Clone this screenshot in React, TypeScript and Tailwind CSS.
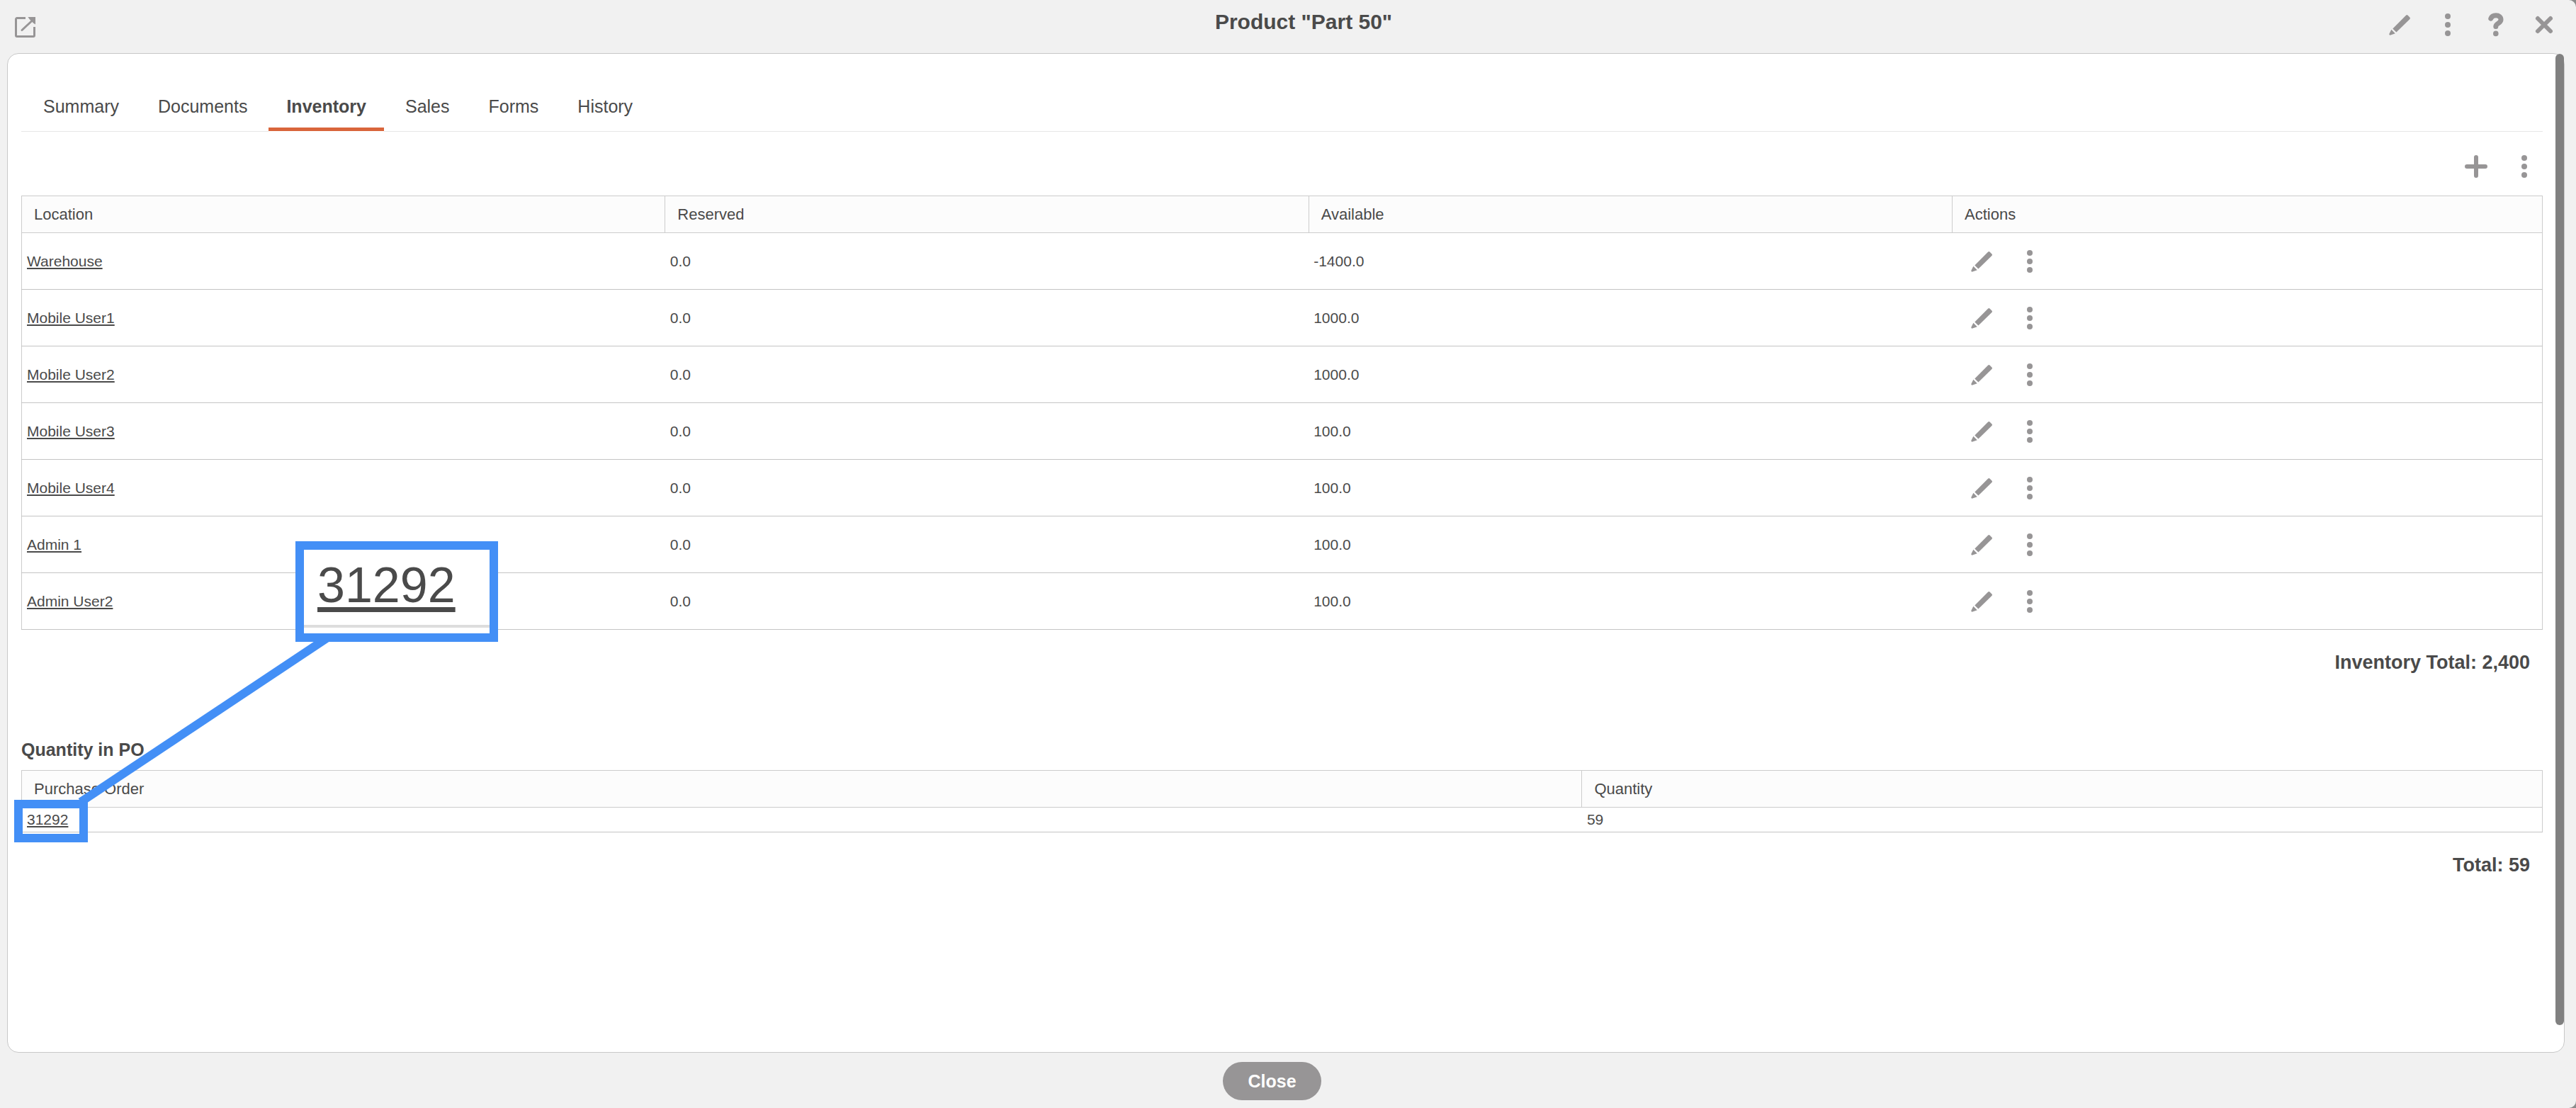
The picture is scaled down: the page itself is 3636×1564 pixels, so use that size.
import type { ReactNode } from "react";

const tabs = ["Summary", "Documents", "Inventory", "Sales", "Forms", "History"];

const inventory = [
  { location: "Warehouse", reserved: "0.0", available: "-1400.0" },
  { location: "Mobile User1", reserved: "0.0", available: "1000.0" },
  { location: "Mobile User2", reserved: "0.0", available: "1000.0" },
  { location: "Mobile User3", reserved: "0.0", available: "100.0" },
  { location: "Mobile User4", reserved: "0.0", available: "100.0" },
  { location: "Admin 1", reserved: "0.0", available: "100.0" },
  { location: "Admin User2", reserved: "0.0", available: "100.0" },
];

const purchaseOrders = [{ number: "31292", quantity: "59" }];

function PencilIcon() {
  return (
    <svg viewBox="0 0 32 32" className="size-8" fill="currentColor" aria-hidden="true">
      <path d="M6.3 21.5 25.2 2.6a1.6 1.6 0 0 1 2.3 0L30.4 5.6a1.6 1.6 0 0 1 0 2.3L11.4 26.6Z" />
      <path d="M4.4 22.8 9.8 28.2 3.2 30.6a1.4 1.4 0 0 1-1.8-1.8Z" />
    </svg>
  );
}

function DotsIcon() {
  return (
    <svg viewBox="0 0 32 32" className="size-8" fill="currentColor" aria-hidden="true">
      <circle cx="16" cy="4" r="4" />
      <circle cx="16" cy="16" r="4" />
      <circle cx="16" cy="28" r="4" />
    </svg>
  );
}

function HelpIcon() {
  return (
    <svg viewBox="0 0 32 32" className="size-8 overflow-visible" fill="none" stroke="currentColor" aria-hidden="true">
      <path
        d="M8.8 7.2C10 3.8 12.6 2.8 16 2.8c4.2 0 7 2.2 7 6 0 5.2-7.2 4.8-7.2 9.8"
        strokeWidth="7"
        strokeLinecap="round"
      />
      <circle cx="15.8" cy="28.4" r="3.8" fill="currentColor" stroke="none" />
    </svg>
  );
}

function CloseIcon() {
  return (
    <svg viewBox="0 0 32 32" className="size-8" stroke="currentColor" strokeWidth="6" strokeLinecap="round" aria-hidden="true">
      <path d="M7 7 25 25M25 7 7 25" />
    </svg>
  );
}

function PlusIcon() {
  return (
    <svg viewBox="0 0 32 32" className="size-8" stroke="currentColor" strokeWidth="6" strokeLinecap="round" aria-hidden="true">
      <path d="M16 3V29M3 16H29" />
    </svg>
  );
}

function OpenIcon() {
  return (
    <svg viewBox="0 0 30 30" className="size-[30px]" fill="none" stroke="currentColor" strokeWidth="3" aria-hidden="true">
      <path d="M15 1.5H3A1.5 1.5 0 0 0 1.5 3V26A1.5 1.5 0 0 0 3 27.5H26A1.5 1.5 0 0 0 27.5 26V14" />
      <path d="M25 4.5 10 18.5" strokeLinecap="round" />
      <path d="M18.5 0H29V10.5L26 8.5 20.5 3Z" fill="currentColor" stroke="none" />
    </svg>
  );
}

function IconButton({ label, children }: { label: string; children: ReactNode }) {
  return (
    <button type="button" aria-label={label} className="flex size-8 items-center justify-center text-[#979596]">
      {children}
    </button>
  );
}

function HeadCell({ className = "", children }: { className?: string; children: ReactNode }) {
  return (
    <th className={`border border-[#cccccc] px-[17px] text-left font-normal text-[22px] leading-7 ${className}`}>
      {children}
    </th>
  );
}

export default function App() {
  return (
    <div className="min-h-screen bg-[#8c8c8c] font-['Liberation_Sans',Arial,sans-serif] text-[#4a4a4a]">
      <div className="flex min-h-screen flex-col rounded-r-[10px] bg-[#f1f1f1]">
        {/* Title bar */}
        <header className="flex h-[75px] shrink-0 items-start pl-[21px] pr-[29px]">
          <button type="button" aria-label="Open in new window" className="mt-6 text-[#979596]">
            <OpenIcon />
          </button>
          <h1 className="flex-1 pl-[258px] pt-[13px] text-center text-[30px] leading-9 font-bold">
            Product "Part 50"
          </h1>
          <div className="flex gap-9 pt-[19px]">
            <IconButton label="Edit product"><PencilIcon /></IconButton>
            <IconButton label="More"><DotsIcon /></IconButton>
            <IconButton label="Help"><HelpIcon /></IconButton>
            <IconButton label="Close window"><CloseIcon /></IconButton>
          </div>
        </header>

        <main className="relative mr-4 ml-[10px] flex-1 rounded-2xl border border-[#c8c8c8] bg-white pt-[51px] pr-[30px] pl-[19px]">
          {/* Tabs */}
          <nav className="flex gap-[5px] border-b border-[#e6e6e6] pl-[6px] text-[25px] leading-[30px]">
            {tabs.map((tab) => (
              <a
                key={tab}
                href="#"
                className={
                  tab === "Inventory"
                    ? "border-b-[5px] border-[#d9653b] px-[25px] pt-2 pb-[15px] font-bold shadow-[0_1px_0_white]"
                    : "px-[25px] pt-2 pb-5"
                }
              >
                {tab}
              </a>
            ))}
          </nav>

          <div className="flex justify-end gap-9 pt-[33px] pr-[10px] pb-[25px]">
            <IconButton label="Add"><PlusIcon /></IconButton>
            <IconButton label="More"><DotsIcon /></IconButton>
          </div>

          {/* Stock per location */}
          <table className="w-full table-fixed border-collapse border border-[#cccccc] text-[21px] leading-6">
            <thead>
              <tr className="h-[52px] bg-[#fcfcfc]">
                <HeadCell className="w-[25.53%]">Location</HeadCell>
                <HeadCell className="w-[25.53%]">Reserved</HeadCell>
                <HeadCell className="w-[25.53%]">Available</HeadCell>
                <HeadCell>Actions</HeadCell>
              </tr>
            </thead>
            <tbody>
              {inventory.map((row) => (
                <tr key={row.location} className="h-20 border-b border-[#c4c4c4]">
                  <td className="px-[7px]">
                    <a href="#" className="underline decoration-2 underline-offset-2">{row.location}</a>
                  </td>
                  <td className="px-[7px]">{row.reserved}</td>
                  <td className="px-[7px]">{row.available}</td>
                  <td className="px-[25px]">
                    <div className="flex gap-9">
                      <IconButton label={`Edit ${row.location}`}><PencilIcon /></IconButton>
                      <IconButton label={`More for ${row.location}`}><DotsIcon /></IconButton>
                    </div>
                  </td>
                </tr>
              ))}
            </tbody>
          </table>
          <p className="pt-[30px] pr-[18px] text-right text-[27px] leading-8 font-bold">Inventory Total: 2,400</p>

          {/* Purchase orders */}
          <section className="relative pt-[92px]">
            <h2 className="pb-[14px] text-[25px] leading-[30px] font-bold">Quantity in PO</h2>
            <table className="w-full table-fixed border-collapse border border-[#cccccc] text-[21px] leading-6">
              <thead>
                <tr className="h-[52px] bg-[#fcfcfc]">
                  <HeadCell className="w-[61.9%]">Purchase Order</HeadCell>
                  <HeadCell>Quantity</HeadCell>
                </tr>
              </thead>
              <tbody>
                {purchaseOrders.map((po) => (
                  <tr key={po.number} className="h-[35px] border-b border-[#c4c4c4]">
                    <td className="px-[7px]">
                      <a href="#" className="underline decoration-2 underline-offset-2">{po.number}</a>
                    </td>
                    <td className="px-[7px]">{po.quantity}</td>
                  </tr>
                ))}
              </tbody>
            </table>
            <p className="pt-[30px] pr-[18px] text-right text-[27px] leading-8 font-bold">Total: 59</p>

            {/* Magnified order number */}
            <svg className="absolute top-[-49px] left-[80px] h-[240px] w-[360px]" viewBox="0 0 360 240" aria-hidden="true">
              <path d="M351 -1 4 230" stroke="#438ff6" strokeWidth="12" />
            </svg>
            <div className="absolute top-[178px] left-[-10px] h-[60px] w-[104px] border-[12px] border-[#438ff6]" />
            <div className="absolute top-[-187px] left-[387px] h-[142px] w-[286px] border-[12px] border-[#438ff6] bg-white">
              <div className="flex h-[110px] items-end border-b-4 border-[#dddddd] pb-[11px] pl-[19px] text-[70px] leading-[90px]">
                <span className="underline decoration-[7px] underline-offset-[7px]">31292</span>
              </div>
            </div>
          </section>

          <div className="absolute top-0 right-0 bottom-[38px] w-3 rounded-full bg-[#808080]" />
        </main>

        <footer className="flex shrink-0 justify-center pt-[13px] pr-[45px] pb-[11px]">
          <button type="button" className="h-[54px] w-[139px] rounded-full bg-[#979596] text-[25px] leading-[30px] font-bold text-white">
            Close
          </button>
        </footer>
      </div>
    </div>
  );
}
